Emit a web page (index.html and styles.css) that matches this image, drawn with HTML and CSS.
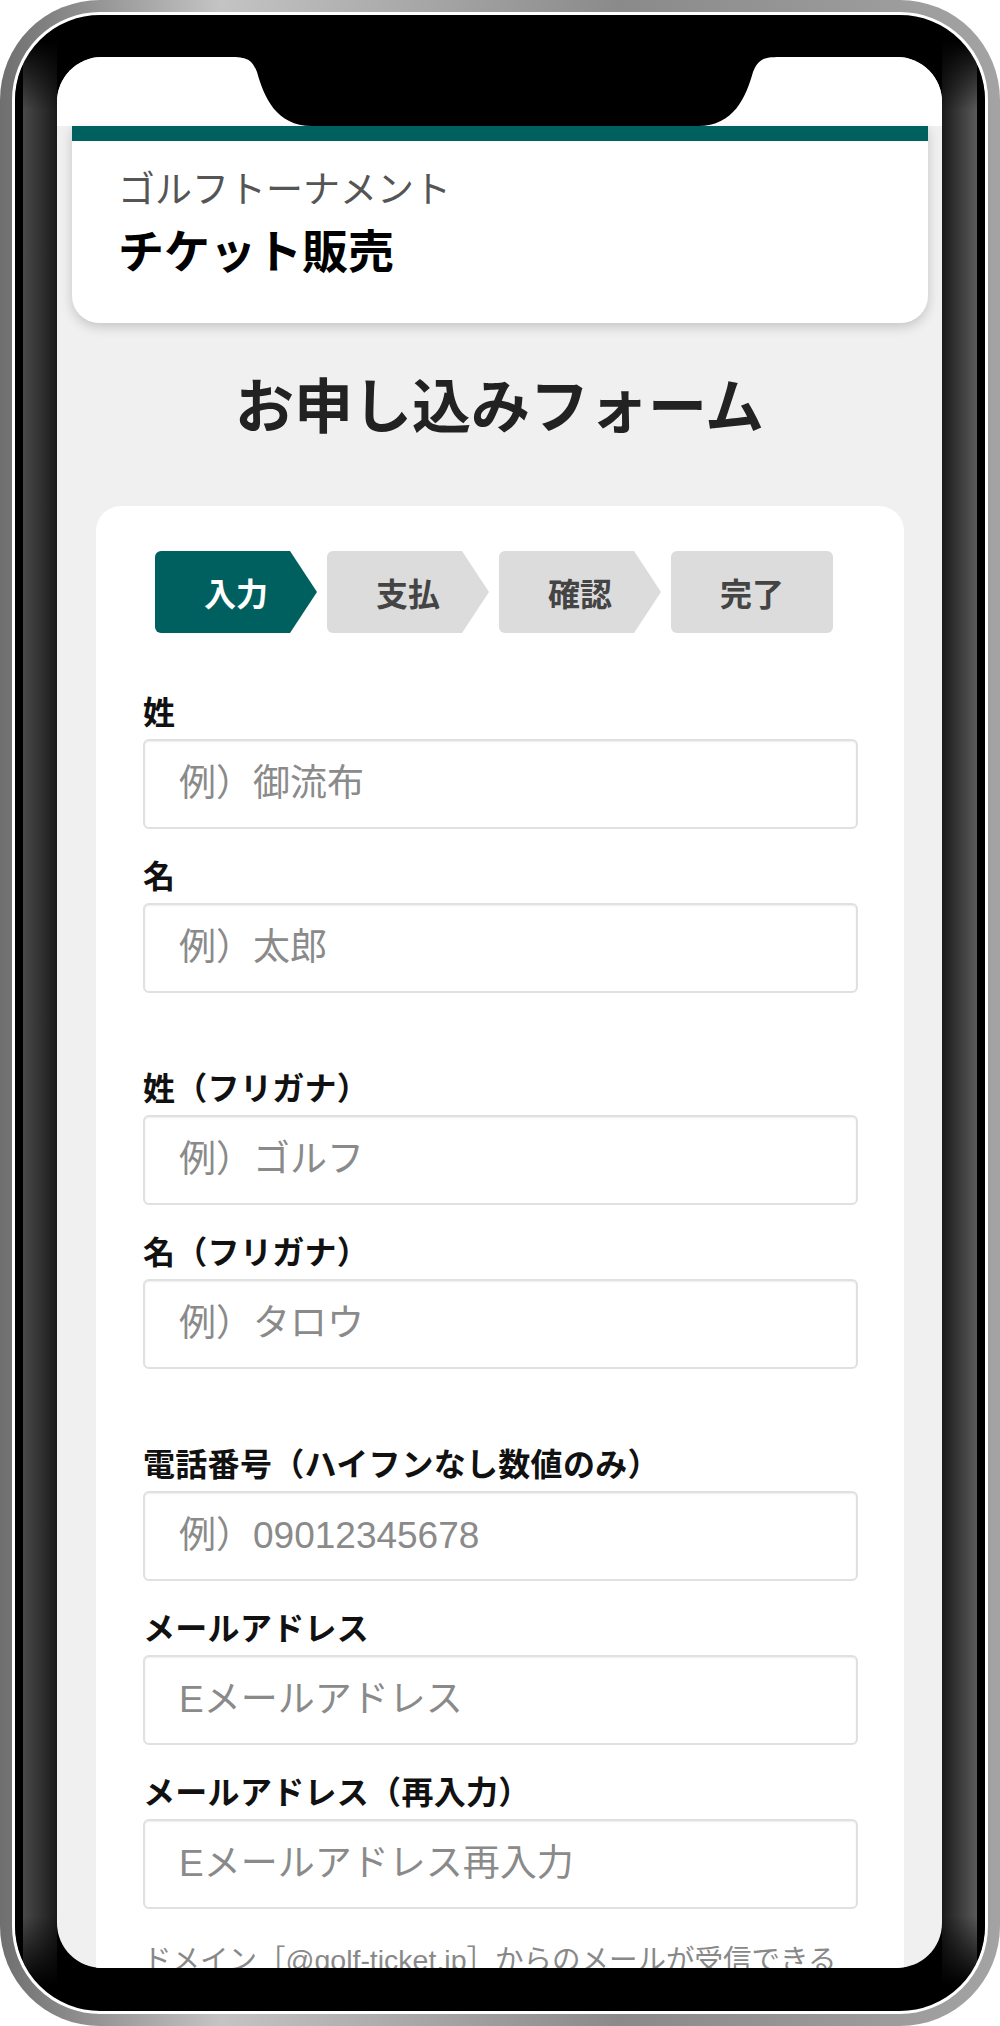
FILE: index.html
```html
<html>
<head>
	<meta charset="utf-8">
	<meta name="viewport" content="width=device-width, initial-scale=1">
	<title>お申し込みフォーム</title>
	<link rel="stylesheet" href="styles.css">
</head>
<body>

	<div class="phone">
		<div class="bezel">
			<div class="screen">
				<div class="status"></div>

				<header class="site-head">
					<p class="site-sub">ゴルフトーナメント</p>
					<h1 class="site-name">チケット販売</h1>
				</header>

				<h2 class="page-title">お申し込みフォーム</h2>

				<div class="form-card">
					<ol class="steps">
						<li class="step active">入力</li>
						<li class="step">支払</li>
						<li class="step">確認</li>
						<li class="step last">完了</li>
					</ol>

					<form class="form">
						<div class="group">
							<div class="field">
								<label>姓</label>
								<input type="text" placeholder="例）御流布">
							</div>
							<div class="field">
								<label>名</label>
								<input type="text" placeholder="例）太郎">
							</div>
						</div>
						<div class="group">
							<div class="field">
								<label>姓（フリガナ）</label>
								<input type="text" placeholder="例）ゴルフ">
							</div>
							<div class="field">
								<label>名（フリガナ）</label>
								<input type="text" placeholder="例）タロウ">
							</div>
						</div>
						<div class="group">
							<div class="field">
								<label>電話番号（ハイフンなし数値のみ）</label>
								<input type="tel" placeholder="例）09012345678">
							</div>
							<div class="field">
								<label>メールアドレス</label>
								<input type="email" placeholder="Eメールアドレス">
							</div>
							<div class="field">
								<label>メールアドレス（再入力）</label>
								<input type="email" placeholder="Eメールアドレス再入力">
							</div>
							<p class="note">ドメイン［@golf-ticket.jp］からのメールが受信できるように設定してください。</p>
						</div>
					</form>
				</div>

				<!-- notch over the top of the screen -->
				<svg class="notch" width="885" height="70" viewBox="0 0 885 70">
					<path d="M173 0 C191 0 195 3 200 15 C207 40 219 69 255 69 L641 69 C677 69 689 40 696 15 C701 3 705 0 723 0 Z" fill="#000"/>
				</svg>
			</div>
		</div>
	</div>

</body>
</html>
```

FILE: styles.css
```css
*{
	box-sizing: border-box;
	padding: 0;
	margin: 0;
}
body
{
	background: #fff;
	font-family: "Liberation Sans", "Noto Sans CJK JP", sans-serif;
}
.phone
{
	width: 1000px;
	height: 2026px;
	padding: 12px;
	border-radius: 100px;
	background: linear-gradient(to right, #6f6f6f 0%, #c4c4c4 22%, #8a8a8a 62%, #a3a3a3 100%);
}
.bezel
{
	position: relative;
	height: 100%;
	border: 3px solid #fff;
	border-radius: 88px;
	padding: 42px 43px 43px 42px;
	background: #000;
}
/* soft light on the side edges of the bezel */
.bezel::before
{
	content: "";
	position: absolute;
	inset: 0;
	border-radius: 85px;
	background: linear-gradient(to right, #000 0 8px, #4a4a4a 8px, #1a1a1a 42px, transparent 42px, transparent calc(100% - 43px), #1a1a1a calc(100% - 43px), #5a5a5a calc(100% - 8px), #000 calc(100% - 8px));
	-webkit-mask-image: linear-gradient(to bottom, transparent 25px, #000 95px, #000 calc(100% - 95px), transparent calc(100% - 25px));
	mask-image: linear-gradient(to bottom, transparent 25px, #000 95px, #000 calc(100% - 95px), transparent calc(100% - 25px));
}
.screen
{
	position: relative;
	z-index: 1;
	height: 100%;
	border-radius: 45px;
	overflow: hidden;
	background: #f0f0f0;
}
.status
{
	height: 69px;
	background: #fff;
}
.notch
{
	position: absolute;
	top: 0;
	left: 0;
}

/* header */
.site-head
{
	margin: 0 14px 0 15px;
	padding: 22px 46px 36px;
	background: #fff;
	border-top: 15px solid #006060;
	border-radius: 0 0 27px 27px;
	box-shadow: 0 4px 12px rgba(0, 0, 0, 0.18);
}
.site-sub
{
	font-size: 37px;
	line-height: 55px;
	color: #555;
}
.site-name
{
	font-size: 46px;
	line-height: 69px;
	font-weight: bold;
	color: #000;
}
.page-title
{
	margin: 41px 0 54px;
	font-size: 59px;
	line-height: 88px;
	text-align: center;
	color: #222;
}

/* form */
.form-card
{
	margin: 0 38px 0 39px;
	padding: 45px 46px 0 47px;
	background: #fff;
	border-radius: 25px;
	min-height: 1500px;
}
.steps
{
	display: flex;
	gap: 10px;
	list-style: none;
	margin: 0 12px 54px;
}
.step
{
	width: 162px;
	height: 82px;
	display: flex;
	align-items: center;
	justify-content: center;
	font-size: 32px;
	font-weight: bold;
	color: #444;
	background: #dcdcdc;
	border-radius: 6px;
	clip-path: polygon(0 0, calc(100% - 27px) 0, 100% 50%, calc(100% - 27px) 100%, 0 100%);
}
.step.active
{
	background: #006060;
	color: #fff;
}
.step.last
{
	clip-path: none;
}
.form
{
	display: flex;
	flex-direction: column;
	gap: 70px;
}
.group
{
	display: flex;
	flex-direction: column;
	gap: 22px;
}
.field
{
	display: flex;
	flex-direction: column;
}
.field label
{
	font-size: 32px;
	line-height: 52px;
	font-weight: bold;
	letter-spacing: 0.3px;
	color: #111;
}
.field input
{
	width: 100%;
	height: 90px;
	padding: 0 34px;
	font-family: "Liberation Sans", "Noto Sans CJK JP", sans-serif;
	font-size: 37px;
	color: #333;
	border: 2px solid #e0e0e0;
	border-radius: 6px;
	box-shadow: inset 0 1px 2px rgba(0, 0, 0, 0.07);
	outline: none;
}
.field input::placeholder
{
	color: #8a8a8a;
}
.note
{
	margin-top: 8px;
	padding-right: 10px;
	font-size: 28.5px;
	line-height: 42px;
	color: #888;
}
```
